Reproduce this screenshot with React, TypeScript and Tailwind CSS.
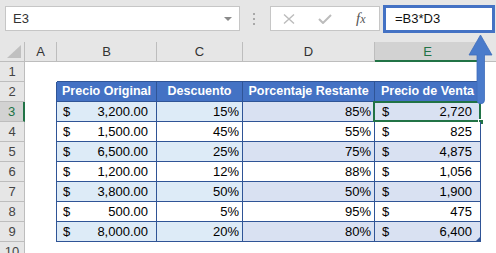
import React from "react"

const data = [
  ["3,200.00", "15%", "85%", "2,720"],
  ["1,500.00", "45%", "55%", "825"],
  ["6,500.00", "25%", "75%", "4,875"],
  ["1,200.00", "12%", "88%", "1,056"],
  ["3,800.00", "50%", "50%", "1,900"],
  ["500.00", "5%", "95%", "475"],
  ["8,000.00", "20%", "80%", "6,400"],
]

function RowHead({ n, active }: { n: number; active?: boolean }) {
  return (
    <div
      className={
        active
          ? "flex w-[25px] shrink-0 items-center justify-center border-b border-r-2 border-b-[#bdbdbd] border-r-[#217346] bg-[#d2d2d2] text-[#217346]"
          : "flex w-[25px] shrink-0 items-center justify-center border-b border-r border-[#bdbdbd] bg-[#e6e6e6] text-[#444]"
      }
    >
      {n}
    </div>
  )
}

export default function App() {
  return (
    <div className="relative h-[253px] w-[496px] overflow-hidden bg-white font-['Liberation_Sans',sans-serif] text-[13px] text-black">
      {/* formula bar */}
      <div className="flex h-[42px] items-start bg-[#e6e6e6]">
        <div className="ml-[5px] mt-[6px] flex h-[25px] w-[235px] items-center justify-between border border-[#c6c6c6] bg-white pl-[7px] pr-[7px] text-[#333]">
          <span>E3</span>
          <span className="h-0 w-0 border-x-[4px] border-t-[4px] border-x-transparent border-t-[#8a8a8a]" />
        </div>
        <div className="ml-[13px] mt-[13px] flex flex-col gap-[3px]">
          <span className="h-[2px] w-[2px] bg-[#a8a8a8]" />
          <span className="h-[2px] w-[2px] bg-[#a8a8a8]" />
          <span className="h-[2px] w-[2px] bg-[#a8a8a8]" />
        </div>
        <div className="ml-[15px] mt-[6px] flex h-[25px] w-[110px] items-center border border-[#c6c6c6] bg-white">
          <svg className="ml-[12px]" width="12" height="10" viewBox="0 0 12 10">
            <path d="M1 0.5 L11 9.5 M11 0.5 L1 9.5" stroke="#bcbcbc" strokeWidth="1.4" fill="none" />
          </svg>
          <svg className="ml-[23px]" width="14" height="10" viewBox="0 0 14 10">
            <path d="M1 5 L5 9 L13 1" stroke="#bcbcbc" strokeWidth="2" fill="none" />
          </svg>
          <span className="ml-[24px] font-['Liberation_Serif',serif] text-[15px] italic text-[#555]">
            f<span className="text-[12px]">x</span>
          </span>
        </div>
        <div className="ml-[3px] mt-[5px] flex h-[28px] w-[112px] items-center border-[3px] border-[#4472c4] bg-white pl-[9px] text-[#111]">
          =B3*D3
        </div>
      </div>

      {/* column headers */}
      <div className="flex h-[20px] bg-[#e6e6e6] text-[#333]">
        <div className="relative w-[25px] shrink-0 border-b border-r border-[#bdbdbd]">
          <svg className="absolute bottom-[3px] right-[3px]" width="14" height="13" viewBox="0 0 14 13">
            <path d="M14 0 L14 13 L0 13 Z" fill="#c0c0c0" />
          </svg>
        </div>
        <div className="flex w-[32px] shrink-0 items-center justify-center border-b border-r border-[#bdbdbd]">A</div>
        <div className="flex w-[100px] shrink-0 items-center justify-center border-b border-r border-[#bdbdbd]">B</div>
        <div className="flex w-[86px] shrink-0 items-center justify-center border-b border-r border-[#bdbdbd]">C</div>
        <div className="flex w-[132px] shrink-0 items-center justify-center border-b border-r border-[#bdbdbd]">D</div>
        <div className="flex w-[106px] shrink-0 items-center justify-center border-b-2 border-r border-b-[#217346] border-r-[#bdbdbd] bg-[#d2d2d2] pt-[1px] text-[#217346]">E</div>
        <div className="flex-1 border-b border-[#bdbdbd]" />
      </div>

      {/* row 1 */}
      <div className="flex h-[20px]">
        <RowHead n={1} />
        <div className="w-[32px] shrink-0" />
        <div className="w-[100px] shrink-0 border-b border-[#2f5496]" />
        <div className="w-[86px] shrink-0 border-b border-[#2f5496]" />
        <div className="w-[132px] shrink-0 border-b border-[#2f5496]" />
        <div className="w-[106px] shrink-0 border-b border-[#2f5496]" />
      </div>

      {/* row 2: table header */}
      <div className="flex h-[20px]">
        <RowHead n={2} />
        <div className="w-[32px] shrink-0 border-r border-[#2f5496]" />
        <div className="flex w-[100px] shrink-0 items-center justify-center border-b border-r border-[#2f5496] bg-[#4472c4] text-[12.5px] font-bold text-white">
          Precio Original
        </div>
        <div className="flex w-[86px] shrink-0 items-center justify-center border-b border-r border-[#2f5496] bg-[#4472c4] text-[12.5px] font-bold text-white">
          Descuento
        </div>
        <div className="flex w-[132px] shrink-0 items-center justify-center border-b border-r border-[#2f5496] bg-[#4472c4] text-[12.5px] font-bold text-white">
          Porcentaje Restante
        </div>
        <div className="flex w-[106px] shrink-0 items-center justify-center border-b border-r border-[#2f5496] bg-[#4472c4] text-[12.5px] font-bold text-white">
          Precio de Venta
        </div>
      </div>

      {data.map((r, i) => {
        const band = i % 2 === 0
        const rowNo = i + 3
        return (
          <div key={rowNo} className="flex h-[20px]">
            <RowHead n={rowNo} active={rowNo === 3} />
            <div className="w-[32px] shrink-0 border-r border-[#2f5496]" />
            <div
              className={`flex w-[100px] shrink-0 items-center justify-between border-b border-r border-[#2f5496] pl-[6px] pr-[8px] ${band ? "bg-[#ddebf7]" : "bg-white"}`}
            >
              <span>$</span>
              <span>{r[0]}</span>
            </div>
            <div
              className={`flex w-[86px] shrink-0 items-center justify-end border-b border-r border-[#2f5496] pr-[3px] ${band ? "bg-[#ddebf7]" : "bg-white"}`}
            >
              {r[1]}
            </div>
            <div
              className={`flex w-[132px] shrink-0 items-center justify-end border-b border-r border-[#2f5496] pr-[3px] ${band ? "bg-[#d9e1f2]" : "bg-white"}`}
            >
              {r[2]}
            </div>
            <div
              className={`relative flex w-[106px] shrink-0 items-center justify-between border-b border-r border-[#2f5496] pl-[7px] pr-[8px] ${band ? "bg-[#d9e1f2]" : "bg-white"}`}
            >
              <span>$</span>
              <span>{r[3]}</span>
              {rowNo === 3 && (
                <>
                  <div className="absolute -left-[2px] -top-[1px] -bottom-[1px] -right-[1px] border-2 border-[#217346]" />
                  <div className="absolute -bottom-[4px] -right-[4px] h-[6px] w-[6px] border border-white bg-[#217346]" />
                </>
              )}
              {rowNo === 9 && (
                <svg className="absolute bottom-0 right-0" width="4" height="4" viewBox="0 0 4 4">
                  <path d="M4 0 L4 4 L0 4 Z" fill="#2f5496" />
                </svg>
              )}
            </div>
          </div>
        )
      })}

      {/* row 10 */}
      <div className="flex h-[20px]">
        <RowHead n={10} />
      </div>

      {/* arrow pointing to the formula */}
      <svg className="absolute left-[466px] top-[33px]" width="30" height="74" viewBox="0 0 30 74">
        <path
          d="M14.5 2 L26 22 L18.5 22 L18.5 67 A3.75 3.75 0 0 1 11 67 L11 22 L3 22 Z"
          fill="#4a7bcb"
          stroke="#3f6dbb"
          strokeWidth="0.8"
        />
      </svg>
    </div>
  )
}
